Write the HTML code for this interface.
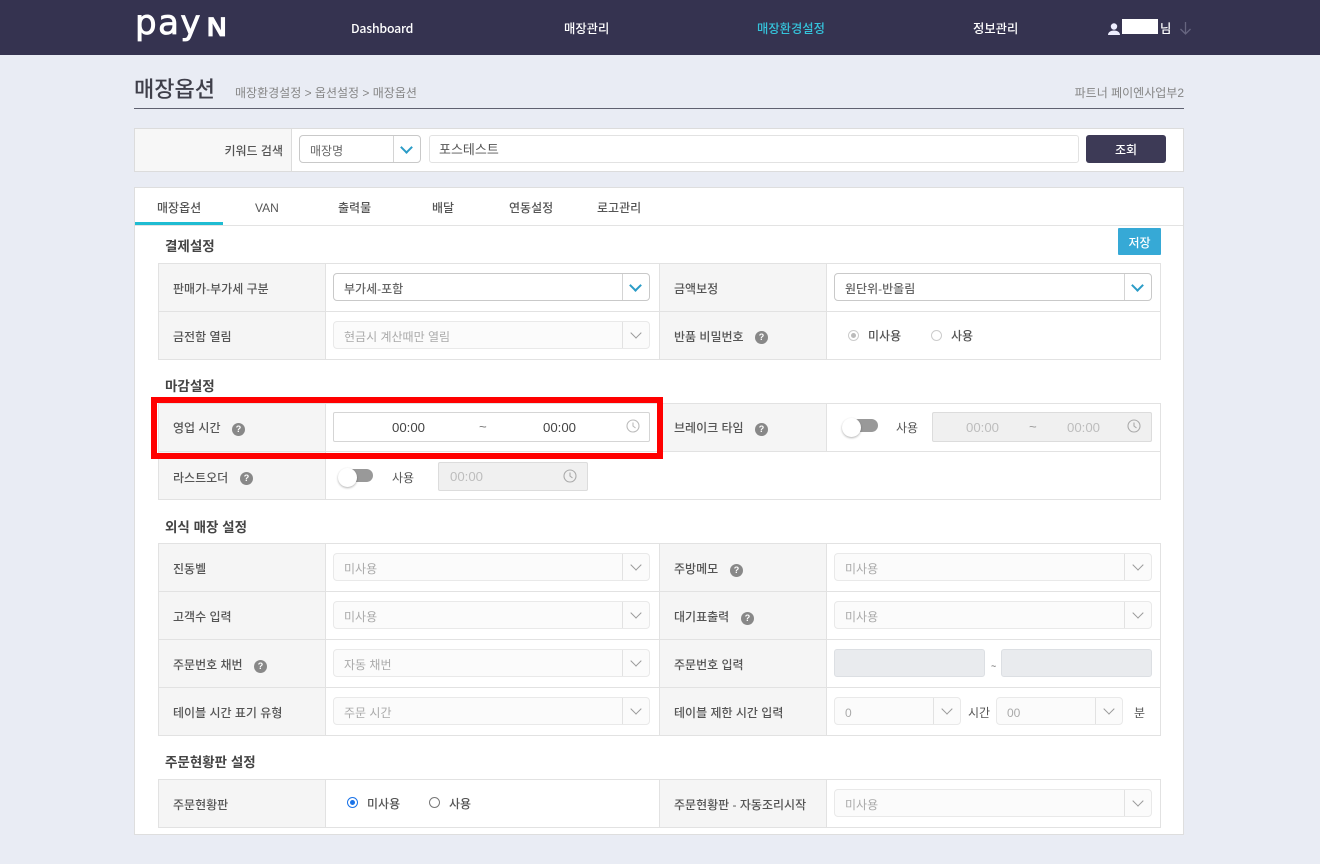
<!DOCTYPE html>
<html lang="ko"><head><meta charset="utf-8"><title>매장옵션</title>
<style>
html,body{margin:0;padding:0}
body{position:relative;width:1320px;height:864px;overflow:hidden;background:#e9ecf4;font:500 12px/16px "Liberation Sans","Noto Sans CJK KR",sans-serif;color:#555}
div,span{box-sizing:border-box}
.a,.t,.c,.l,.s,.h,.r,.b{position:absolute}
.t{white-space:nowrap;height:16px}
.nav{color:#fff;font:500 12.3px/16px "Noto Sans CJK KR",sans-serif;top:20px}
.c,.l{width:335px;height:49px;border:1px solid #e2e2e2;background:#fff}
.l{width:168px;background:#f5f5f5}
.sec{font-size:13.5px;color:#444;font-weight:700;left:165px;height:18px;line-height:18px}
.s{width:317px;height:28px;border:1px solid #c9c9c9;border-radius:4px;background:#fff;color:#666;padding-left:10px;line-height:30px;white-space:nowrap}
.s:before{content:"";position:absolute;right:26px;top:0;bottom:0;width:1px;background:#d4d4d4}
.s:after{content:"";position:absolute;right:9px;top:6.500px;width:7px;height:7px;border-right:2px solid #2b9cc7;border-bottom:2px solid #2b9cc7;transform:rotate(45deg)}
.d{background:#fbfbfb;border-color:#e9e9e9;color:#aaa;font-weight:400}
.d:before{background:#e2e2e2}
.d:after{border-color:#9a9a9a;border-width:0 1.600px 1.600px 0}
.h{width:13px;height:13px;border-radius:50%;background:#888;color:#fff;font:700 9px/13px "Liberation Sans",sans-serif;text-align:center}
.r{width:11px;height:11px;border-radius:50%;border:1px solid #777;background:#fff}
.tm{position:absolute;border:1px solid #d5d5d5;background:#fff;border-radius:2px}
.off{background:#f0f0f0;border-color:#dcdcdc}
.ck{position:absolute;width:14px;height:14px}
.time{font:400 13.200px/16px "Liberation Sans",sans-serif;color:#444;position:absolute;white-space:nowrap}
.gr{color:#bdbdbd}
.tr{position:absolute;width:26px;height:13px;border-radius:7px;background:#999}
.kn{position:absolute;width:19px;height:19px;border-radius:50%;background:#fff;box-shadow:0 1px 2px rgba(0,0,0,.3)}
</style></head><body>

<div class="a" style="left:0;top:0;width:1320px;height:55px;background:#353350"></div>
<span class="t" style="left:135px;top:3px;height:40px;font:400 34px/40px 'DejaVu Sans',sans-serif;color:#fff;letter-spacing:1.500px;-webkit-text-stroke:.8px #fff">pay</span>
<span class="t" style="left:207px;top:12px;height:30px;font:700 27px/30px 'Liberation Sans',sans-serif;color:#fff;-webkit-text-stroke:.7px #fff">N</span>
<span class="t nav" style="left:351px;letter-spacing:-.2px">Dashboard</span>
<span class="t nav" style="left:564px">매장관리</span>
<span class="t nav" style="left:757px;color:#35c3db">매장환경설정</span>
<span class="t nav" style="left:973px">정보관리</span>
<svg class="a" style="left:1107px;top:22px" width="14" height="14" viewBox="0 0 14 14"><circle cx="7" cy="4.500" r="3.200" fill="#eef"/><path d="M1 13c0-3 3-4.500 6-4.500s6 1.500 6 4.500z" fill="#eef"/></svg>
<div class="a" style="left:1122px;top:19px;width:36px;height:15px;background:#fff"></div>
<span class="t nav" style="left:1160px">님</span>
<svg class="a" style="left:1179px;top:21px" width="13" height="14" viewBox="0 0 13 14" fill="none" stroke="#66657f" stroke-width="1.300"><path d="M6.500 1v12M1.500 8l5 5 5-5"/></svg>

<span class="t" style="left:134px;top:74px;height:30px;font-size:22px;line-height:32px;color:#3f3f4a">매장옵션</span>
<span class="t" style="left:235px;top:84px;color:#858585;font-weight:400;line-height:18px">매장환경설정 &gt; 옵션설정 &gt; 매장옵션</span>
<span class="t" style="right:136px;top:84px;color:#858585;font-weight:400;line-height:18px">파트너 페이엔사업부2</span>
<div class="a" style="left:134px;top:108px;width:1050px;height:1px;background:#5f6170"></div>

<div class="a" style="left:134px;top:128px;width:1050px;height:44px;background:#fff;border:1px solid #dcdcdc"></div>
<div class="a" style="left:134px;top:128px;width:158px;height:44px;background:#f7f7f7;border:1px solid #dcdcdc"></div>
<span class="t" style="right:1037px;top:143px">키워드 검색</span>
<div class="s" style="left:299px;top:135px;width:122px;height:28px;font-weight:400;line-height:31px">매장명</div>
<div class="a" style="left:429px;top:135px;width:650px;height:28px;border:1px solid #e2e2e2;border-radius:3px;background:#fff;padding-left:9px;font-size:13px;line-height:27px;font-weight:400;color:#555">포스테스트</div>
<div class="a" style="left:1086px;top:135px;width:80px;height:28px;background:#3d3a56;border-radius:3px;color:#fff;text-align:center;line-height:30px">조회</div>

<div class="a" style="left:134px;top:187px;width:1050px;height:648px;background:#fff;border:1px solid #dedede"></div>
<div class="a" style="left:135px;top:225px;width:1048px;height:1px;background:#e3e3e3"></div>
<div class="a" style="left:135px;top:222px;width:88px;height:3px;background:#1fbcd2"></div>
<span class="t" style="left:157px;top:200px">매장옵션</span>
<span class="t" style="left:255px;top:200px">VAN</span>
<span class="t" style="left:338px;top:200px">출력물</span>
<span class="t" style="left:432px;top:200px">배달</span>
<span class="t" style="left:509px;top:200px">연동설정</span>
<span class="t" style="left:597px;top:200px">로고관리</span>

<div class="a" style="left:1118px;top:228px;width:43px;height:27px;background:#36a9d6;border-radius:1px;color:#fff;text-align:center;line-height:30px">저장</div>

<span class="t sec" style="top:238px">결제설정</span>
<span class="t sec" style="top:378px">마감설정</span>
<span class="t sec" style="top:519px">외식 매장 설정</span>
<span class="t sec" style="top:754px">주문현황판 설정</span>

<!-- rows -->
<div class="l" style="left:158px;top:263px"></div><div class="c" style="left:325px;top:263px"></div><div class="l" style="left:659px;top:263px"></div><div class="c" style="left:826px;top:263px"></div>
<div class="l" style="left:158px;top:311px"></div><div class="c" style="left:325px;top:311px"></div><div class="l" style="left:659px;top:311px"></div><div class="c" style="left:826px;top:311px"></div>
<div class="l" style="left:158px;top:403px"></div><div class="c" style="left:325px;top:403px"></div><div class="l" style="left:659px;top:403px"></div><div class="c" style="left:826px;top:403px"></div>
<div class="l" style="left:158px;top:451px"></div><div class="c" style="left:325px;top:451px;width:836px"></div>
<div class="l" style="left:158px;top:543px"></div><div class="c" style="left:325px;top:543px"></div><div class="l" style="left:659px;top:543px"></div><div class="c" style="left:826px;top:543px"></div>
<div class="l" style="left:158px;top:591px"></div><div class="c" style="left:325px;top:591px"></div><div class="l" style="left:659px;top:591px"></div><div class="c" style="left:826px;top:591px"></div>
<div class="l" style="left:158px;top:639px"></div><div class="c" style="left:325px;top:639px"></div><div class="l" style="left:659px;top:639px"></div><div class="c" style="left:826px;top:639px"></div>
<div class="l" style="left:158px;top:687px"></div><div class="c" style="left:325px;top:687px"></div><div class="l" style="left:659px;top:687px"></div><div class="c" style="left:826px;top:687px"></div>
<div class="l" style="left:158px;top:779px"></div><div class="c" style="left:325px;top:779px"></div><div class="l" style="left:659px;top:779px"></div><div class="c" style="left:826px;top:779px"></div>

<!-- labels -->
<span class="t" style="left:173px;top:281px">판매가-부가세 구분</span>
<span class="t" style="left:674px;top:281px">금액보정</span>
<span class="t" style="left:173px;top:329px">금전함 열림</span>
<span class="t" style="left:674px;top:329px">반품 비밀번호</span>
<span class="t" style="left:173px;top:420px">영업 시간</span>
<span class="t" style="left:674px;top:420px">브레이크 타임</span>
<span class="t" style="left:173px;top:470px">라스트오더</span>
<span class="t" style="left:173px;top:561px">진동벨</span>
<span class="t" style="left:674px;top:561px">주방메모</span>
<span class="t" style="left:173px;top:609px">고객수 입력</span>
<span class="t" style="left:674px;top:609px">대기표출력</span>
<span class="t" style="left:173px;top:657px">주문번호 채번</span>
<span class="t" style="left:674px;top:657px">주문번호 입력</span>
<span class="t" style="left:173px;top:705px">테이블 시간 표기 유형</span>
<span class="t" style="left:674px;top:705px">테이블 제한 시간 입력</span>
<span class="t" style="left:173px;top:797px">주문현황판</span>
<span class="t" style="left:674px;top:797px">주문현황판 - 자동조리시작</span>

<!-- help -->
<span class="h" style="left:232px;top:423px">?</span>
<span class="h" style="left:240px;top:472px">?</span>
<span class="h" style="left:755px;top:331px">?</span>
<span class="h" style="left:755px;top:423px">?</span>
<span class="h" style="left:254px;top:660px">?</span>
<span class="h" style="left:730px;top:564px">?</span>
<span class="h" style="left:741px;top:612px">?</span>

<!-- selects -->
<div class="s" style="left:333px;top:273px">부가세-포함</div>
<div class="s" style="left:834px;top:273px;width:318px">원단위-반올림</div>
<div class="s d" style="left:333px;top:321px">현금시 계산때만 열림</div>
<div class="s d" style="left:333px;top:553px">미사용</div>
<div class="s d" style="left:834px;top:553px;width:318px">미사용</div>
<div class="s d" style="left:333px;top:601px">미사용</div>
<div class="s d" style="left:834px;top:601px;width:318px">미사용</div>
<div class="s d" style="left:333px;top:649px">자동 채번</div>
<div class="s d" style="left:333px;top:697px">주문 시간</div>
<div class="s d" style="left:834px;top:697px;width:127px">0</div>
<div class="s d" style="left:996px;top:697px;width:127px">00</div>
<div class="s d" style="left:834px;top:789px;width:318px">미사용</div>
<span class="t" style="left:968px;top:705px;font-weight:400">시간</span>
<span class="t" style="left:1134px;top:705px;font-weight:400">분</span>

<!-- order number inputs -->
<div class="a" style="left:834px;top:649px;width:151px;height:28px;background:#e9ebee;border:1px solid #dcdfe3;border-radius:3px"></div>
<span class="t" style="left:991px;top:658px;font-weight:400;font-size:9px">~</span>
<div class="a" style="left:1001px;top:649px;width:151px;height:28px;background:#e9ebee;border:1px solid #dcdfe3;border-radius:3px"></div>

<!-- radios -->
<div class="r" style="left:848px;top:330px;border-color:#ccc"></div>
<div class="a" style="left:851px;top:333px;width:5px;height:5px;border-radius:50%;background:#bbb"></div>
<span class="t" style="left:868px;top:328px">미사용</span>
<div class="r" style="left:931px;top:330px;border-color:#ccc"></div>
<span class="t" style="left:951px;top:328px">사용</span>
<div class="r" style="left:347px;top:797px;border:1.500px solid #1a73e8"></div>
<div class="a" style="left:350px;top:800px;width:5px;height:5px;border-radius:50%;background:#1a73e8"></div>
<span class="t" style="left:367px;top:796px">미사용</span>
<div class="r" style="left:429px;top:797px"></div>
<span class="t" style="left:449px;top:796px">사용</span>

<!-- time -->
<div class="tm" style="left:333px;top:412px;width:317px;height:30px"></div>
<span class="time" style="left:392px;top:420px">00:00</span>
<span class="time" style="left:479px;top:419px;color:#777">~</span>
<span class="time" style="left:543px;top:420px">00:00</span>
<svg class="ck" style="left:626px;top:419px" viewBox="0 0 14 14" fill="none" stroke="#bbb" stroke-width="1.100"><circle cx="7" cy="7" r="6"/><path d="M7 3.500V7l2.500 2"/></svg>

<div class="tr" style="left:347px;top:469px"></div>
<div class="kn" style="left:338px;top:468px"></div>
<span class="t" style="left:392px;top:470px;font-weight:400">사용</span>
<div class="tm off" style="left:438px;top:462px;width:150px;height:29px"></div>
<span class="time gr" style="left:450px;top:469px">00:00</span>
<svg class="ck" style="left:563px;top:469px" viewBox="0 0 14 14" fill="none" stroke="#aaa" stroke-width="1.100"><circle cx="7" cy="7" r="6"/><path d="M7 3.500V7l2.500 2"/></svg>

<div class="tr" style="left:852px;top:419px"></div>
<div class="kn" style="left:842px;top:418px"></div>
<span class="t" style="left:896px;top:420px;font-weight:400">사용</span>
<div class="tm off" style="left:932px;top:412px;width:220px;height:30px"></div>
<span class="time gr" style="left:966px;top:420px">00:00</span>
<span class="time" style="left:1029px;top:419px;color:#999">~</span>
<span class="time gr" style="left:1067px;top:420px">00:00</span>
<svg class="ck" style="left:1127px;top:419px" viewBox="0 0 14 14" fill="none" stroke="#aaa" stroke-width="1.100"><circle cx="7" cy="7" r="6"/><path d="M7 3.500V7l2.500 2"/></svg>

<!-- red highlight -->
<div class="a" style="left:151px;top:397px;width:512px;height:62px;border:6px solid #f00"></div>

</body></html>
